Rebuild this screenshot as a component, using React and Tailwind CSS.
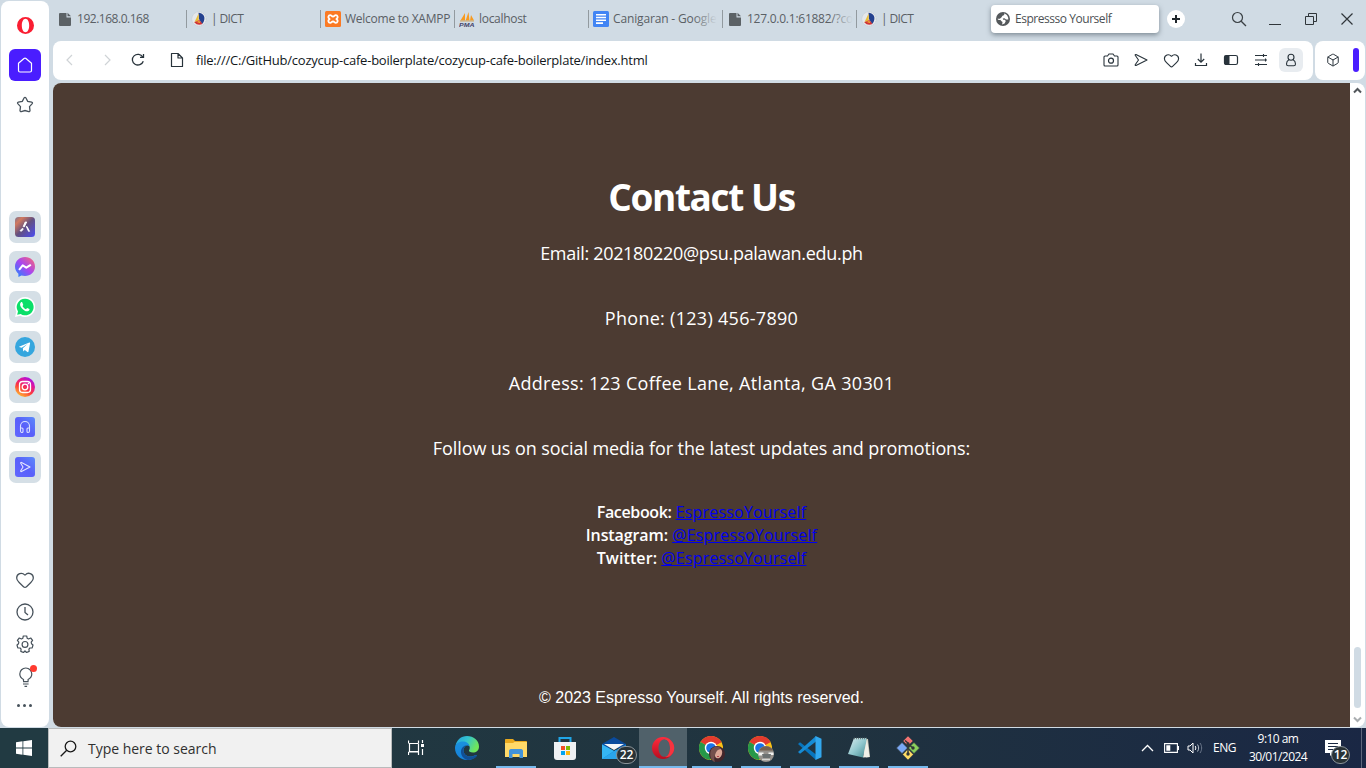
import React from "react";
import { Heart, Settings, Box } from "lucide-react";

const S = ({ w = 16, h, vb, className = "", children, ...p }) => (
  <svg width={w} height={h || w} viewBox={vb || `0 0 ${w} ${h || w}`} fill="none" className={"block shrink-0 " + className} {...p}>
    {children}
  </svg>
);

const FileFav = () => (
  <S w={16}>
    <path d="M3 2h6.500v4.500H14V14a1 1 0 0 1-1 1H3a1 1 0 0 1-1-1V3a1 1 0 0 1 1-1z" fill="#5c6266" />
    <path d="M10.500 1.700 14 5.300h-3.500z" fill="#5c6266" />
  </S>
);
const DictFav = () => (
  <S w={16}>
    <circle cx="8" cy="8" r="7.200" fill="#e5e8eb" stroke="#c6cdd4" strokeWidth="1" strokeDasharray="1 1" />
    <path d="M7.500 1.800C12 2.500 14 5 13.300 8.500c-.3 2-1.300 3.500-2.300 4.500L8 8z" fill="#24418f" />
    <path d="M7.700 2.500v7.200L3.500 11z" fill="#e9bd35" />
    <path d="M3.200 11.200 8.500 9l3 4a7 7 0 0 1-8.300-1.800z" fill="#cf3438" />
    <path d="m5.500 11 2.800-1 1 2z" fill="#f3c332" />
  </S>
);
const XamppFav = () => (
  <S w={16}>
    <rect width="16" height="16" rx="1.500" fill="#fb7a24" />
    <path d="M5.200 4.200c1.500 0 1.300 1.300 2.800 1.300s1.300-1.300 2.800-1.300c1.900 0 2.500 2.200 1.100 3.200-.7.500-.7.700 0 1.200 1.400 1 .8 3.200-1.100 3.200-1.500 0-1.300-1.300-2.800-1.300s-1.300 1.300-2.800 1.300c-1.900 0-2.500-2.200-1.100-3.200.7-.5.700-.7 0-1.200-1.400-1-.8-3.200 1.100-3.200z" stroke="#fff" strokeWidth="1.800" />
  </S>
);
const PmaFav = () => (
  <S w={16}>
    <path d="M1.500 9.500 6 2v7.500zM6.700 9.500 9.500 1l1 8.500zM11 9.500l1-5.500 3 5.500z" fill="#f79a1f" />
    <path d="M1 10h14" stroke="#c9a56a" strokeWidth="1" />
    <text x="0" y="15.600" fontSize="6" fontWeight="bold" fontStyle="italic" fontFamily="Liberation Sans, sans-serif" fill="#44446b" textLength="15.500" lengthAdjust="spacingAndGlyphs">PMA</text>
  </S>
);
const DocsFav = () => (
  <S w={16}>
    <rect width="16" height="16" rx="1.500" fill="#4285f4" />
    <path d="M3 3.700h10M3 6.500h10M3 9.300h10M3 12.100h7" stroke="#fff" strokeWidth="1.600" />
  </S>
);
const GlobeFav = () => (
  <S w={16}>
    <circle cx="8" cy="8" r="7" fill="#54585b" />
    <path d="M9 2.500c1 1.500-.5 2-1.500 2.300-.8.400-.3 1.300-1.200 1.700L4.800 7.800H2.500c.2 1 1.500 1.300 2.700 1.200 1 .1.700 1.300 1.800 1.400.9.200.4 1.800 0 3.100l2.600-1 1.200-2.500-1-1.200H8.200l-.4-1.200 1.700-.4L11 8.500h2.300C13.600 5.500 11.500 3 9 2.500z" fill="#fff" />
  </S>
);

const tabs = [
  { i: <FileFav />, t: "192.168.0.168", c: "tracking-[-0.48px]" },
  { i: <DictFav />, t: "| DICT", c: "tracking-[-0.6px]" },
  { i: <XamppFav />, t: "Welcome to XAMPP", c: "tracking-[-0.25px]" },
  { i: <PmaFav />, t: "localhost", c: "tracking-[-0.3px]" },
  { i: <DocsFav />, t: "Canigaran - Google", c: "tracking-[-0.15px]", fade: true },
  { i: <FileFav />, t: "127.0.0.1:61882/?co", c: "tracking-[-0.25px]", fade: true },
  { i: <DictFav />, t: "| DICT", c: "tracking-[-0.6px]", last: true },
];

const TabBar = () => (
  <div className="flex h-[41px] items-start pt-[5px]">
    {tabs.map((x, n) => (
      <div key={n} className="flex h-7 w-[134px] shrink-0 items-center">
        <div className="flex min-w-0 flex-1 items-center gap-1 pl-1">
          {x.i}
          <span className={"relative whitespace-nowrap text-[12px] leading-4 text-[#5a6065] " + x.c}>
            {x.t}
            {x.fade && <span className="absolute inset-y-0 right-0 w-6 bg-linear-to-r from-transparent to-[#d0dbe4]" />}
          </span>
        </div>
        <div className={"h-[18px] w-px " + (x.last ? "" : "bg-[#929a9f]")} />
      </div>
    ))}
    <div className="flex h-7 w-[168px] shrink-0 items-center gap-1 rounded bg-white pl-1 shadow-[0_2px_5px_rgba(60,75,85,0.55)]">
      <GlobeFav />
      <span className="text-[12px] leading-4 tracking-[-0.46px] text-[#4c5154]">Espressso Yourself</span>
    </div>
    <div className="mt-[5px] ml-2 flex h-[18px] w-[18px] items-center justify-center rounded-full bg-white">
      <S w={10}><path d="M5 1v8M1 5h8" stroke="#20272c" strokeWidth="2" /></S>
    </div>
    <div className="ml-[46px] flex h-7 items-center gap-5">
      <S w={16}><circle cx="6.500" cy="6.500" r="5" stroke="#3a4044" strokeWidth="1.200" /><path d="m10.200 10.200 4.800 4.800" stroke="#3a4044" strokeWidth="1.300" /></S>
      <S w={16}><path d="M2 13.500h12" stroke="#30363a" /></S>
      <S w={16}><path d="M2.500 5.500h8v8h-8zM5.500 5.500v-3h8v8h-3" stroke="#30363a" /></S>
      <S w={16}><path d="m2.500 2.500 11 11m0-11-11 11" stroke="#30363a" strokeWidth="1.200" /></S>
    </div>
  </div>
);

const ink = "#28333b";
const Cell = ({ children, className = "w-[30px]" }) => <div className={"flex h-6 items-center justify-center " + className}>{children}</div>;

const AddressBar = () => (
  <div className="flex h-[39px] w-[1313px] gap-0.5">
    <div className="flex w-[1260px] shrink-0 items-center rounded-lg bg-white pb-px pl-[9px]">
      <S w={16}><path d="m10 3-5 5 5 5" stroke="#cfd3d6" strokeWidth="1.200" /></S>
      <S w={16} className="ml-[21px]"><path d="m6 3 5 5-5 5" stroke="#cfd3d6" strokeWidth="1.200" /></S>
      <S w={16} className="ml-[15px]"><path d="M12.800 5A5.600 5.300 0 1 0 13.300 9.300M13.500 2v3.400H10" stroke={ink} strokeWidth="1.300" /></S>
      <S w={16} className="ml-[23px]"><path d="M2.500 1.500h6.500l4.500 4.500v8.500h-11zM9 1.500V6h4.500" stroke={ink} strokeWidth="1.200" strokeLinejoin="round" /></S>
      <span className="ml-[11px] w-[460px] text-[13px] leading-5 tracking-[-0.23px] whitespace-nowrap text-[#12171b]">file:///C:/GitHub/cozycup-cafe-boilerplate/cozycup-cafe-boilerplate/index.html</span>
      <div className="mr-[10px] ml-auto flex items-center">
        <Cell><S w={16}><path d="M2 4h2.500L6 2h4l1.500 2H14c.6 0 1 .4 1 1v8c0 .6-.4 1-1 1H2c-.6 0-1-.4-1-1V5c0-.6.400-1 1-1z" stroke={ink} strokeWidth="1.100" /><circle cx="8" cy="8.700" r="2.500" stroke={ink} strokeWidth="1.200" /></S></Cell>
        <Cell><S w={16}><path d="M3 2.500 14 8 3 13.500c-.6.200-1-.2-.8-.8L5.500 8 2.200 3.300C2 2.700 2.400 2.300 3 2.500z" stroke={ink} strokeWidth="1.100" strokeLinejoin="round" /></S></Cell>
        <Cell><Heart size={17} strokeWidth={1.600} color={ink} /></Cell>
        <Cell><S w={16}><path d="M8 1.500v8.500M4.800 7 8 10.200 11.200 7M2.500 11v2.500h11V11" stroke={ink} strokeWidth="1.200" /></S></Cell>
        <Cell><S w={16}><rect x="1.500" y="3.500" width="13" height="9" rx="1.800" stroke={ink} strokeWidth="1.200" /><path d="M1.500 4.500c0-.6.400-1 1-1h4v9h-4c-.6 0-1-.4-1-1z" fill={ink} /></S></Cell>
        <Cell><S w={16}><path d="M2 3.500h12M2 8h12M2 12.500h12M10.500 2v3M12.500 6.500v3M5.500 11v3" stroke={ink} strokeWidth="1.100" /></S></Cell>
        <Cell className="ml-[3px] w-6 rounded-md bg-[#e8ecf0]"><S w={16}><circle cx="8" cy="5.200" r="3" stroke={ink} strokeWidth="1.100" /><path d="M5.800 7.800C4 8.800 3.500 10.500 3.500 12c0 1 .8 1.800 1.800 1.800h5.400c1 0 1.800-.8 1.800-1.800 0-1.500-.5-3.200-2.300-4.200" stroke={ink} strokeWidth="1.100" /></S></Cell>
      </div>
    </div>
    <div className="flex w-[50px] shrink-0 items-center rounded-lg bg-white pb-px pl-[11px]">
      <Box size={14} strokeWidth={1.700} color={ink} />
      <div className="ml-[13px] h-6 w-[6px] rounded-full bg-[#4a1dff]" />
    </div>
  </div>
);

const OperaO = () => (
  <S w={17} vb="0 0 24 24"><path fillRule="evenodd" d="M12 0a12 12 0 1 0 0 24 12 12 0 0 0 0-24zm0 2.500c3.100 0 5.200 4 5.200 9.500s-2.100 9.500-5.200 9.500S6.800 17.500 6.800 12 8.900 2.500 12 2.500z" fill="#fa1e32" /></S>
);

const AppTile = ({ children }) => <div className="flex h-8 w-8 items-center justify-center rounded-[7px] bg-[#d5dfe6]">{children}</div>;

const Gradients = () => (
  <defs>
    <linearGradient id="aria" x1="0" y1="0" x2="1" y2="1"><stop stopColor="#7b7591" /><stop offset=".2" stopColor="#d1795e" /><stop offset=".5" stopColor="#63507f" /><stop offset="1" stopColor="#4b4cf5" /></linearGradient>
    <linearGradient id="msg" x1="0" y1="1" x2="1" y2="0"><stop stopColor="#168cff" /><stop offset=".5" stopColor="#a745f0" /><stop offset="1" stopColor="#ff6b70" /></linearGradient>
    <linearGradient id="ig" x1=".2" y1="1" x2=".8" y2="0"><stop stopColor="#ffc62f" /><stop offset=".4" stopColor="#fc3a3c" /><stop offset=".7" stopColor="#df169c" /><stop offset="1" stopColor="#9a12f5" /></linearGradient>
    <linearGradient id="vio" x1="1" y1="0" x2="0" y2="1"><stop stopColor="#5c8bfb" /><stop offset=".5" stopColor="#595ffa" /><stop offset="1" stopColor="#6168ff" /></linearGradient>
  </defs>
);

const g = "#47525b";
const Sidebar = () => (
  <aside className="mt-px ml-px flex h-[726px] w-12 shrink-0 flex-col items-center rounded-lg bg-white">
    <div className="flex h-12 items-center"><OperaO /></div>
    <div className="flex h-8 w-8 items-center justify-center rounded-md bg-[#4a1dff]">
      <S w={18}><path d="M2.500 7.300 8 2.500c.6-.5 1.400-.5 2 0l5.500 4.800v7.200c0 1-.6 1.500-1.500 1.500H4c-.9 0-1.500-.5-1.500-1.500z" stroke="#fff" strokeWidth="1.200" strokeLinejoin="round" /></S>
    </div>
    <div className="flex h-12 items-center">
      <S w={18}><path d="M8.200 1.800c.4-.7 1.200-.7 1.600 0l1.900 3.500 4 .8c.8.200 1 .9.500 1.500l-2.700 3 .5 4c0 .8-.6 1.200-1.300.9L9 14.500l-3.700 1c-.7.300-1.300-.1-1.300-.9l.5-4-2.700-3c-.5-.6-.3-1.300.5-1.500l4-.8z" stroke={g} strokeWidth="1.300" /></S>
    </div>
    <div className="mt-[82px] flex flex-col gap-2">
      <AppTile><S w={20}><Gradients /><rect width="20" height="20" rx="3.500" fill="url(#aria)" /><path d="M5.300 14c-.5-.6 2.300-3 2.700-2.500.6.600-1 3.300-2.700 2.500zM8.200 9.500l2-4.500h1.500l-2.500 5zM11.300 9.500h.7l2.500 4.800h-1z" fill="#fff" stroke="#fff" strokeWidth=".9" strokeLinejoin="round" /></S></AppTile>
      <AppTile><S w={20}><path d="M10 0C4.500 0 0 4 0 9.500c0 3 1.300 5.500 3.400 7.200V20l3-1.500c1.100.3 2.300.5 3.600.5 5.600 0 10-4 10-9.500S15.600 0 10 0z" fill="url(#msg)" /><path d="m4.500 12.300 3.200-4 3.600 2.400 4-2.500" stroke="#fff" strokeWidth="2" strokeLinejoin="round" strokeLinecap="round" /></S></AppTile>
      <AppTile><S w={20}><path d="M10 0a10 10 0 0 0-8.700 14.800L0 20l5.300-1.300A10 10 0 1 0 10 0z" fill="#fff" /><path d="M10 1.700a8.300 8.300 0 0 0-7 12.700L2.200 17.800l3.500-.9A8.300 8.300 0 1 0 10 1.700z" fill="#0bdf69" /><path d="M7.300 5.500c-.3-.6-1-.5-1.500 0-1.500 1.600-.6 3.700 1 5.700 2.200 2.500 4.500 3.700 6.400 2.900 1-.4 1.400-1.200 1.300-2l-2.400-1.200-1.100 1.300C9.300 11.600 8.100 10.300 7.500 9l.8-1.100z" fill="#fff" /></S></AppTile>
      <AppTile><S w={20}><circle cx="10" cy="10" r="10" fill="#35a6de" /><path d="m4 9.800 10.300-4.200c.6-.2.900.1.800.7l-1.600 8.300c-.1.600-.6.700-1.100.4l-2.600-1.900-1.500 1.300-.5-3.200 4.700-4.100-5.800 3.700-2.600-.7z" fill="#fff" /></S></AppTile>
      <AppTile><S w={20}><circle cx="10" cy="10" r="10" fill="url(#ig)" /><rect x="4.500" y="4.500" width="11" height="11" rx="3.200" stroke="#fff" strokeWidth="1.300" /><circle cx="10" cy="10" r="2.800" stroke="#fff" strokeWidth="1.300" /><circle cx="13.400" cy="6.600" r=".8" fill="#fff" /></S></AppTile>
      <AppTile><S w={20}><rect width="20" height="20" rx="3" fill="url(#vio)" /><path d="M5.500 12V9a4.500 4.500 0 0 1 9 0v3M5.500 11H7c.6 0 1 .3 1 1v2.500c0 .6-.4 1-1 1s-1.500-.5-1.500-1.500zM14.500 11H13c-.6 0-1 .3-1 1v2.500c0 .6.4 1 1 1s1.500-.5 1.500-1.500z" stroke="#dce2ff" strokeWidth="1.100" /></S></AppTile>
      <AppTile><S w={20}><rect width="20" height="20" rx="3" fill="url(#vio)" /><path d="M6.500 5.500 15 10l-8.500 4.500c-.7.300-1-.2-.8-.7L8 10 5.700 6.200c-.2-.5.100-1 .8-.7z" stroke="#e2e6ff" strokeWidth="1.100" strokeLinejoin="round" /></S></AppTile>
    </div>
    <div className="mt-[81px] -ml-px flex flex-col items-center">
      <div className="flex h-8 items-center"><Heart size={20} strokeWidth={1.500} color={g} /></div>
      <div className="flex h-8 items-center"><S w={18}><circle cx="9" cy="9" r="8" stroke={g} strokeWidth="1.300" /><path d="M9 4v5.500l3 2.500" stroke={g} strokeWidth="1.300" /></S></div>
      <div className="flex h-8 items-center">
        <S w={18}><path d="M7.300 1h3.400l.5 2.300 1.300.7 2.200-1 1.900 2.300-1.400 1.900.3 1.500L17 10l-.8 2.900-2.300.1-1 1.200.3 2.200-2.700 1.100L9 15.800l-1.500 1.700-2.700-1.100.3-2.200-1-1.200-2.300-.1L1 10l1.500-1.300.3-1.500-1.400-1.900L3.300 3l2.200 1 1.300-.7z" stroke={g} strokeWidth="1.200" strokeLinejoin="round" /><circle cx="9" cy="9.400" r="2.900" stroke={g} strokeWidth="1.200" /></S>
      </div>
      <div className="relative flex h-8 items-center">
        <S w={20} h={22} className="translate-y-px"><path d="M8.500 15v-1.500C6 12.200 4.800 10.200 4.800 8a6 6 0 1 1 12 0c0 2.200-1.200 4.200-3.700 5.500V15M8 15.600h5.600M8 18h5.600M9.500 20.300h2.600" stroke={g} strokeWidth="1.200" /></S>
        <span className="absolute top-[5px] right-[-2px] h-[7px] w-[7px] rounded-full bg-[#ff3b30]" />
      </div>
      <div className="flex h-[26px] items-center gap-[3px]">
        {[0, 1, 2].map((n) => <span key={n} className="h-[3px] w-[3px] rounded-full bg-[#47525b]" />)}
      </div>
    </div>
  </aside>
);

const socials = [
  { n: "Facebook:", h: "EspressoYourself", c: "tracking-[-0.35px]" },
  { n: "Instagram:", h: "@EspressoYourself", c: "tracking-[-0.1px]" },
  { n: "Twitter:", h: "@EspressoYourself", c: "tracking-[0.1px]" },
];

const Page = () => (
  <div className="mt-[3px] flex h-[644px] w-[1312px] overflow-hidden rounded-lg bg-white">
    <main className="flex w-[1297px] shrink-0 flex-col items-center bg-[#4c3b32] pt-[88px] font-['Comic_Sans_MS','Open_Sans',sans-serif] whitespace-nowrap text-white">
      <h1 className="h-[57px] text-[37px] leading-[52px] font-bold tracking-[-1.4px]">Contact Us</h1>
      <div className="flex flex-col items-center gap-[38px] pt-[12px] text-[18px] leading-[27px] font-medium">
        <p className="tracking-[-0.31px]">Email: 202180220@psu.palawan.edu.ph</p>
        <p className="tracking-[0.29px]">Phone: (123) 456-7890</p>
        <p className="tracking-[0.32px]">Address: 123 Coffee Lane, Atlanta, GA 30301</p>
        <p className="tracking-[-0.08px]">Follow us on social media for the latest updates and promotions:</p>
      </div>
      <div className="flex flex-col items-center pt-[39px] text-[16px] leading-[23px]">
        {socials.map((s) => (
          <p key={s.n}><span className={"font-semibold " + s.c}>{s.n}</span> <a className="tracking-[0.18px] text-[#0000ee] underline">{s.h}</a></p>
        ))}
      </div>
      <footer className="mt-[118px] font-['Liberation_Sans',sans-serif] text-[16px] leading-[20px]">© 2023 Espresso Yourself. All rights reserved.</footer>
    </main>
    <div className="flex flex-1 flex-col items-center">
      <S w={9} h={14}><path d="M1 9.500 4.500 6 8 9.500" stroke="#51565a" strokeWidth="2" /></S>
      <div className="mt-[550px] h-[61px] w-[7px] rounded-sm bg-[#d0dbe4]" />
      <S w={9} h={16}><path d="M1 9.500 4.500 13 8 9.500" stroke="#a9adb0" strokeWidth="2" /></S>
    </div>
  </div>
);

const EdgeI = () => (
  <S w={24}>
    <defs>
      <linearGradient id="e1" x1="0" y1="0" x2="1" y2=".4"><stop stopColor="#249fde" /><stop offset=".5" stopColor="#33c3cf" /><stop offset="1" stopColor="#70e65a" /></linearGradient>
      <linearGradient id="e2" x1="0" y1="0" x2="0" y2="1"><stop stopColor="#1a91df" /><stop offset="1" stopColor="#1580d8" /></linearGradient>
    </defs>
    <path d="M.500 10C1.500 4 6 0 12 0c6.500 0 12 4.500 12 10.500 0 4-2.800 6-6 6-3 0-4.500-1.300-4-2.300 1.500-1.700 1.200-6-3.500-7C6 6.300 1.500 7.500.500 10z" fill="url(#e1)" />
    <path d="M0 12c0-4 3.500-6.500 8-6.500 3.300 0 6 2 6.400 4.700C12 8.500 8.500 10.700 8.500 14.500c0 4 4 6.700 8 6 2.500-.5 4-1.500 5.300-1.500.4 0 .2.500 0 .8C19.700 22.500 16.500 24 12 24 5.200 24 0 18.700 0 12z" fill="url(#e2)" />
    <path d="M11.500 9.300c-3.500.5-5.800 3.700-5.500 7.200.3 3.500 2.800 6.500 6.500 7.500 4.500.2 7.700-1.500 9.300-4.200.2-.3.400-.8 0-.8-1.300 0-2.800 1.500-5.300 1.500-4 .700-8-2-8-6 0-2.500 1.300-4.300 3-5.200z" fill="#114f95" />
  </S>
);
const ExplorerI = () => (
  <S w={22} h={19}>
    <path d="M0 1c0-.6.400-1 1-1h7l2 2h11c.6 0 1 .4 1 1v14H0z" fill="#e9a91e" />
    <path d="M0 4h8l1.500-1H22v15H0z" fill="#ffd968" />
    <path d="M4 19v-7c0-1 .6-2 2-2h10c1.400 0 2 1 2 2v7h-3.500v-4h-7v4z" fill="#4293d9" />
  </S>
);
const StoreI = () => (
  <S w={24}>
    <path d="M6.500 6V2h11v4" stroke="#20a6e8" strokeWidth="2" />
    <path d="M1 6h22v15c0 1.700-1 3-3 3H4c-2 0-3-1.300-3-3z" fill="#eff1f3" />
    <path d="M8 10h4v4H8z" fill="#f04e23" /><path d="M13 10h4v4h-4z" fill="#7dba00" /><path d="M8 15h4v4H8z" fill="#03a4ee" /><path d="M13 15h4v4h-4z" fill="#fdb70c" />
  </S>
);
const MailI = () => (
  <S w={24}>
    <path d="m0 8 12-7 12 7v4H0z" fill="#0a4b9d" /><path d="M2 8h20l-10 6z" fill="#f4f6f7" />
    <path d="M0 8.500 12 15l12-6.500V23H0z" fill="#1488d9" /><path d="m0 23 12-8L0 8.500z" fill="#35b5f3" /><path d="m0 23 14-9 10 9z" fill="#2ba5eb" />
  </S>
);
const OperaTask = () => (
  <S w={24}>
    <defs><linearGradient id="op" x1="0" y1="0" x2="0" y2="1"><stop stopColor="#ff2c3d" /><stop offset="1" stopColor="#b80d1f" /></linearGradient></defs>
    <path fillRule="evenodd" d="M12 1a11 11 0 1 0 0 22 11 11 0 0 0 0-22zm1.500 2.200c3.400 0 5.500 3.600 5.500 8.800s-2.100 8.800-5.500 8.800S7.500 17.200 7.500 12s2.600-8.800 6-8.800z" fill="url(#op)" />
    <path d="M13.500 3.200c1.500-.8 4-.6 6 1 5 4.200 5 11.400 0 15.600-2 1.600-4.500 1.800-6 1 3.400 0 5.500-3.600 5.500-8.800s-2.100-8.800-5.500-8.800z" fill="#f6343f" />
  </S>
);
const ChromeI = ({ alt }) => (
  <S w={26} className="translate-y-px">
    <circle cx="12" cy="12" r="12" fill="#fbc116" />
    <path d="M12 12 1.600 6A12 12 0 0 1 22.400 6z" fill="#e33b2e" />
    <path d="M12 12 1.600 6A12 12 0 0 0 11 24l5.500-9z" fill="#26984a" />
    <path d="M12 6h10.400L12 12z" fill="#e33b2e" />
    <circle cx="12" cy="12" r="6.200" fill="#fff" /><circle cx="12" cy="12" r="4.800" fill="#1a73e8" />
    {alt ? (
      <g><circle cx="18" cy="18" r="8" fill="#96928d" /><path d="M11 14.500a8 8 0 0 1 14 0z" fill="#75614f" /><path d="M10.500 16.500h5v3h-5zM20.500 16.500h5v2.500h-5z" fill="#f2f3f1" /><path d="M14 18h9l-1 4h-7z" fill="#6d7272" /><path d="M14 23.500h8" stroke="#d6d6d3" strokeWidth="1.500" /></g>
    ) : (
      <g><circle cx="18" cy="18" r="8" fill="#42262b" /><ellipse cx="19.500" cy="17.500" rx="3.500" ry="5" fill="#dba796" transform="rotate(20 19.500 17.500)" /><path d="M12 14c2-4 8-5 10-1-3 0-5 2-6 6-1 3-1 5 0 7-4-1-6-7-4-12z" fill="#74504c" /><path d="M18 20.500h2" stroke="#ad4148" /></g>
    )}
  </S>
);
const CodeI = () => (
  <S w={24}>
    <path d="m0 8 2-1.800 16 12.300V24L0 8z" fill="#0875bd" /><path d="m0 16 2 1.800L18 5.500V0L0 16z" fill="#168cd5" />
    <path d="m17.500 0 6 2.800v18.400l-6 2.800z" fill="#32a8ee" />
  </S>
);
const NotepadI = () => (
  <S w={24}>
    <defs><linearGradient id="np" x1="0" y1="0" x2="1" y2="1"><stop stopColor="#dcedf0" /><stop offset=".5" stopColor="#91c8ce" /><stop offset="1" stopColor="#428990" /></linearGradient></defs>
    <path d="m7 2 14 1 2 18-4 .5z" fill="#c9c8b8" /><path d="M7 2h13l-4 19.500L1 18z" fill="url(#np)" /><path d="m20 3 2.500 18-6.500.500z" fill="#f0f0e9" /><path d="M7 2.500h13" stroke="#6a7778" strokeWidth="1.500" strokeDasharray="1 1" />
  </S>
);
const GitI = () => (
  <S w={24}>
    <g stroke="#3b4142" strokeWidth=".6"><path d="m12 0 5 5-5 5-5-5z" fill="#f27272" /><path d="m6 6.500 5.500 5.500L6 17.500.500 12z" fill="#7aa8f5" /><path d="m18 6.500 5.500 5.500-5.500 5.500-5.500-5.500z" fill="#8bd05c" /><path d="m12 13 5.300 5.500L12 24l-5.300-5.500z" fill="#ffdc65" /></g>
    <path d="M9 4.500 12 7v11M12 8l5 4" stroke="#343839" strokeWidth="1.500" /><circle cx="12" cy="8" r="1.700" fill="#303536" /><circle cx="17" cy="12" r="1.700" fill="#303536" /><circle cx="12" cy="18" r="1.700" fill="#303536" />
  </S>
);

const Task = ({ children, line, active, badge }) => (
  <div className={"relative flex h-10 w-12 shrink-0 items-center justify-center " + (active ? "bg-[#50616a]" : "")}>
    {children}
    {badge}
    {line && <div className={"absolute bottom-0 left-1/2 h-0.5 -translate-x-1/2 bg-[#76b9ed] " + (active ? "w-12" : "w-10")} />}
  </div>
);
const Badge = ({ children, className }) => (
  <span className={"absolute flex items-center justify-center rounded-full border border-[#8b9499] bg-[#293236] text-[12px] leading-none font-semibold text-white " + className}>{children}</span>
);

const Taskbar = () => (
  <div className="flex h-10 items-center bg-linear-to-r from-[#213a42] from-10% via-[#20333f] via-60% to-[#1a2744] text-white">
    <div className="flex w-12 justify-center"><S w={16}><path d="m0 2.200 6.500-.9v6.300H0zM7.300 1.200 16 0v7.600H7.300zM0 8.400h6.500v6.300L0 13.800zM7.300 8.400H16V16l-8.700-1.200z" fill="#fff" /></S></div>
    <div className="flex h-10 w-[344px] items-center border border-[#b9bbbc] bg-[#f1f1f1] pl-[11px]">
      <S w={17}><circle cx="10.500" cy="6.500" r="5.300" stroke="#1a1a1a" strokeWidth="1.300" /><path d="m6.700 10.300-6 6" stroke="#1a1a1a" strokeWidth="1.300" /></S>
      <span className="ml-[11px] text-[14px] tracking-[-0.02px] text-[#303030]">Type here to search</span>
    </div>
    <div className="flex w-12 justify-center"><S w={16}><path d="M.500 3V.500M.500 3.500h10M10.500 3V.500M1.500 3.500v8h9v-8M.500 15v-3M.500 12h10v3M14.500 0v3M14.500 9v6" stroke="#fff" strokeWidth="1.200" /><path d="M13 4h3v3h-3z" fill="#fff" /></S></div>
    <div className="flex gap-px pl-[3px]">
      <Task><EdgeI /></Task>
      <Task line><ExplorerI /></Task>
      <Task><StoreI /></Task>
      <Task badge={<Badge className="right-px bottom-1 h-[18px] w-[21px]">22</Badge>}><MailI /></Task>
      <Task line active><OperaTask /></Task>
      <Task line><ChromeI /></Task>
      <Task line><ChromeI alt /></Task>
      <Task line><CodeI /></Task>
      <Task line><NotepadI /></Task>
      <Task line><GitI /></Task>
    </div>
    <div className="ml-auto flex h-full items-center text-[12px]">
      <S w={13} h={8}><path d="M1 7 6.500 1.500 12 7" stroke="#fff" strokeWidth="1.300" /></S>
      <S w={16} h={10} className="ml-[10px]"><path d="M.6.600h12.800v8.800H.6z" stroke="#fff" strokeWidth="1.100" /><path d="M2.300 2.300h4v5.400h-4zM13.500 3H15v4h-1.500z" fill="#fff" /></S>
      <S w={17} h={14} className="ml-[7px]"><path d="M1 5v4h2l3 3V2L3 5z" stroke="#fff" /><path d="M8.200 5c.8 1.200.8 2.800 0 4" stroke="#fff" /><path d="M10.500 3.500c1.500 2 1.500 5 0 7" stroke="#b5bdc8" /><path d="M13 2c2.200 3 2.200 7 0 10" stroke="#6c788b" /></S>
      <span className="ml-[9px] w-[24px] text-[12px] tracking-[-0.5px]">ENG</span>
      <div className="ml-[6px] w-[70px] text-center text-[12px] leading-[18px] tracking-[-0.55px]"><div>9:10 am</div><div>30/01/2024</div></div>
      <div className="relative ml-[10px] h-10 w-[43px]">
        <S w={16} h={16} className="mt-[12px] ml-[2px]"><path d="M0 0h16v13H8l-3 3v-3H0z" fill="#fff" /><path d="M3 3.500h10M3 6.500h10M3 9.500h7" stroke="#1b2a43" /></S>
        <Badge className="top-[18px] left-[8px] h-[18px] w-[19px]">12</Badge>
        <div className="absolute inset-y-0 right-[4px] w-px bg-[#5d677c]" />
      </div>
    </div>
  </div>
);

export default function App() {
  return (
    <div className="h-[768px] w-[1366px] overflow-hidden bg-[#d0dbe4] font-['Segoe_UI','Open_Sans',sans-serif]">
      <div className="flex h-[728px]">
        <Sidebar />
        <div className="ml-1 w-[1313px]">
          <TabBar />
          <AddressBar />
          <Page />
        </div>
      </div>
      <Taskbar />
    </div>
  );
}
